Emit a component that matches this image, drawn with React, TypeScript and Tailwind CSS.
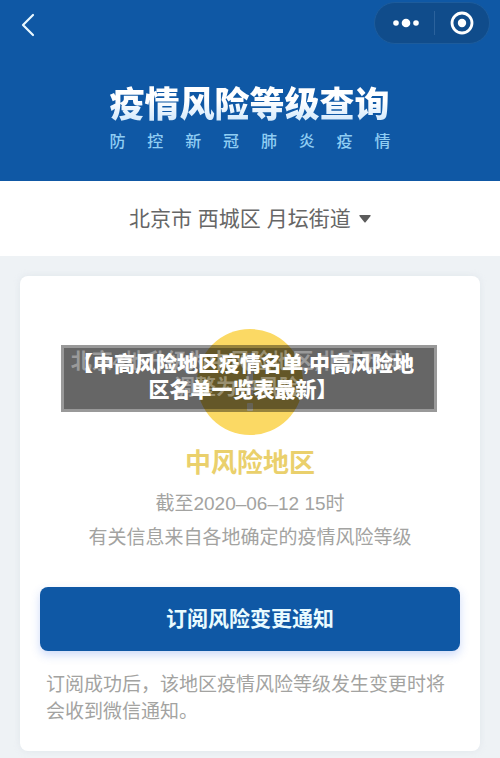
import { useState } from "react";

const subtitle = ["防", "控", "新", "冠", "肺", "炎", "疫", "情"];
const places = ["北京市 西城区 月坛街道"];

function Header() {
  return (
    <header className="h-[181px] bg-[#0f58a5]">
      <nav className="flex h-[46px] items-center justify-between pl-4 pr-[10px]">
        <button type="button" aria-label="返回" className="flex h-8 w-6 items-center justify-center pt-1">
          <svg width="14" height="24" viewBox="0 0 14 24" fill="none" stroke="#e9f8ff" strokeWidth="2.2" strokeLinecap="round" strokeLinejoin="round">
            <path d="M12 2 L2 12 L12 22" />
          </svg>
        </button>
        <div className="flex h-[42px] w-[116px] items-center rounded-full border border-[#1d5c9c] bg-[#104c8b]">
          <button type="button" aria-label="更多" className="flex h-full flex-1 items-center justify-center pl-1">
            <svg width="26" height="10" viewBox="0 0 26 10" fill="#ffffff">
              <circle cx="3" cy="5" r="2.8" />
              <circle cx="13" cy="5" r="4.3" />
              <circle cx="23" cy="5" r="2.8" />
            </svg>
          </button>
          <span className="h-6 w-px bg-[#2b629c]" />
          <button type="button" aria-label="关闭" className="flex h-full flex-1 items-center justify-center">
            <svg width="24" height="24" viewBox="0 0 24 24">
              <circle cx="12" cy="12" r="10" fill="none" stroke="#ffffff" strokeWidth="2.8" />
              <circle cx="12" cy="12" r="4.2" fill="#ffffff" />
            </svg>
          </button>
        </div>
      </nav>
      <div className="mx-auto mt-[37px] w-[281px]">
        <h1 className="whitespace-nowrap bg-gradient-to-b from-white from-40% to-[#c5e2fa] bg-clip-text text-[35px] font-black leading-[44px] text-transparent">
          疫情风险等级查询
        </h1>
        <p className="mt-[5px] flex justify-between text-base font-medium leading-5 text-[#8fcdf3]">
          {subtitle.map((char) => (
            <span key={char}>{char}</span>
          ))}
        </p>
      </div>
    </header>
  );
}

function PlacePicker() {
  const [place, setPlace] = useState(places[0]);
  return (
    <div className="flex h-[75px] items-center justify-center bg-white">
      <label className="flex items-center gap-2">
        <select
          aria-label="选择地区"
          value={place}
          onChange={(event) => setPlace(event.target.value)}
          className="appearance-none bg-transparent text-[21px] leading-8 text-[#666666] outline-none"
        >
          {places.map((item) => (
            <option key={item}>{item}</option>
          ))}
        </select>
        <svg width="12" height="8" viewBox="0 0 12 8" fill="#5c5c5c">
          <path d="M1 0 H11 Q12.4 0 11.4 1.2 L6.8 7 Q6 8 5.2 7 L0.6 1.2 Q-0.4 0 1 0 Z" />
        </svg>
      </label>
    </div>
  );
}

function Banner() {
  return (
    <div className="absolute left-[41px] right-[43px] top-[69px] h-[67px] border-[3px] border-black/40 bg-black/60 bg-clip-padding pr-3 text-center text-[21px] font-bold leading-[26px]">
      <p className="absolute inset-x-0 top-0 whitespace-nowrap pr-6 text-white/35">
        北京4地升级为中风险地区,北京西城
        <br />
        调整为中风险
      </p>
      <p className="relative whitespace-nowrap pt-[3px] font-black text-white">
        【中高风险地区疫情名单,中高风险地
        <br />
        区名单一览表最新】
      </p>
    </div>
  );
}

function RiskCard() {
  return (
    <section className="relative rounded-lg bg-white px-5 pb-[26px] pt-[53px] shadow-[0_0_6px_rgba(200,210,218,0.35)]">
      <svg className="mx-auto block" width="106" height="106" viewBox="0 0 106 106">
        <circle cx="53" cy="53" r="53" fill="#fbd964" />
        <rect x="50" y="24" width="6" height="42" rx="1" fill="#ffffff" />
        <rect x="50" y="74" width="6" height="8" rx="1" fill="#fff6d5" />
      </svg>
      <h2 className="mt-2 text-center text-[26px] font-bold leading-10 text-[#ead06c]">中风险地区</h2>
      <div className="mt-1 text-center text-[19px] leading-[34px] text-[#a3a3a1]">
        <p>截至2020–06–12 15时</p>
        <p className="whitespace-nowrap">有关信息来自各地确定的疫情风险等级</p>
      </div>
      <button
        type="button"
        className="mt-8 h-16 w-full rounded-lg bg-[#0f58a5] text-[21px] font-bold text-[#e9fbff] shadow-[0_4px_10px_rgba(60,110,230,0.25)]"
      >
        订阅风险变更通知
      </button>
      <p className="mt-5 pl-[6px] text-[19px] leading-[27px] text-[#a3a3a1]">
        订阅成功后，该地区疫情风险等级发生变更时将会收到微信通知。
      </p>
      <Banner />
    </section>
  );
}

export default function App() {
  return (
    <div className="min-h-screen bg-[#eef2f5] font-['Liberation_Sans','Noto_Sans_CJK_SC',sans-serif]">
      <Header />
      <PlacePicker />
      <main className="px-5 pb-[7px] pt-5">
        <RiskCard />
      </main>
    </div>
  );
}
